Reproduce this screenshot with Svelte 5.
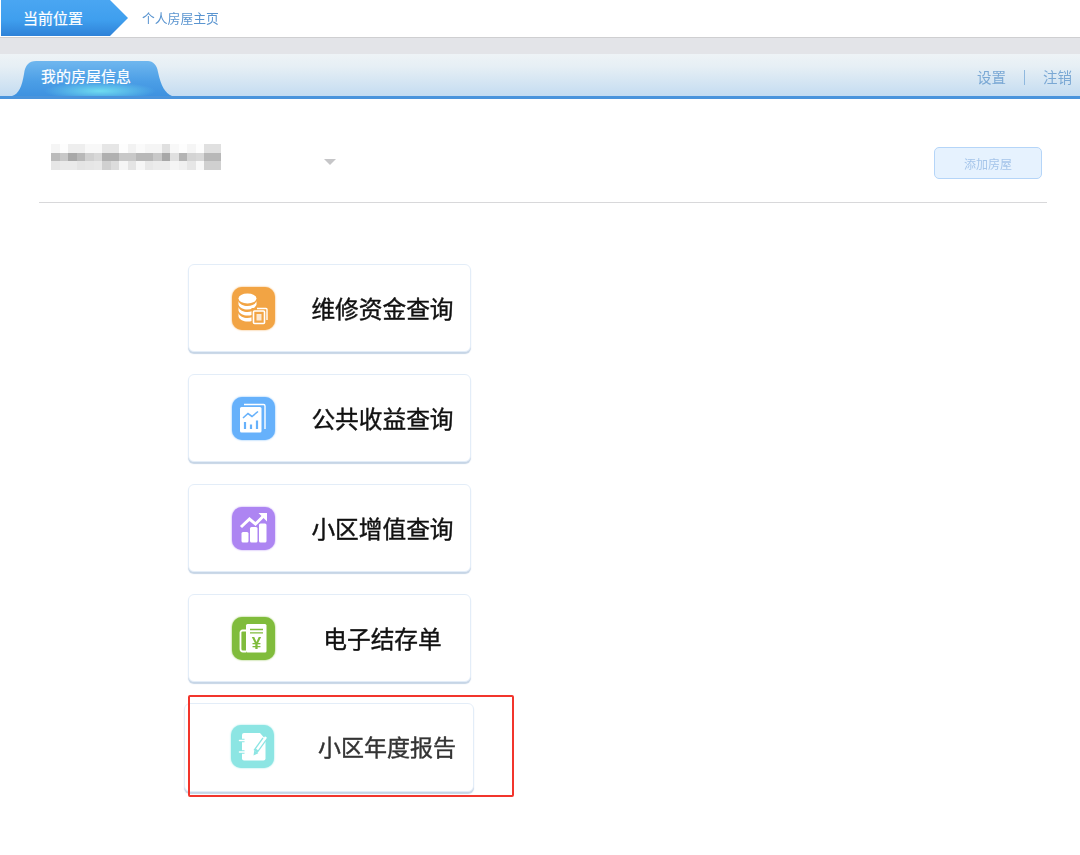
<script>
	// the house address is pixelated in the source, these are the grey levels of its cells
	const mosaic = [
		[245, 253, 238, 238, 248, 248, 230, 230, 253, 242, 250, 245, 245, 224, 248, 253, 245, 253, 224, 224],
		[187, 200, 168, 184, 208, 216, 176, 176, 200, 200, 184, 184, 200, 168, 224, 180, 212, 216, 184, 184],
		[230, 234, 234, 228, 230, 232, 208, 220, 245, 228, 246, 232, 236, 236, 245, 240, 230, 248, 208, 208]
	];

	const cards = [
		{ name: 'funds', label: '维修资金查询' },
		{ name: 'income', label: '公共收益查询' },
		{ name: 'value', label: '小区增值查询' },
		{ name: 'statement', label: '电子结存单' }
	];
</script>

{#snippet icon(name)}
	<svg class="icon {name}" viewBox="0 0 43 43" width="43" height="43">
		{#if name === 'funds'}
			<ellipse cx="15.500" cy="11.500" rx="9" ry="5" fill="#fff" />
			<path d="M6.500 14c1 3.200 4.800 5 9 5s8-1.800 9-5v3.600c-1 3.200-4.800 5-9 5s-8-1.800-9-5z" fill="#fff" />
			<path d="M6.500 20c1 3.200 4.800 5 9 5 1.600 0 3-.2 4.500-.7v3.700c-1.400.4-3 .6-4.500.6-4.200 0-8-1.800-9-5z" fill="#fff" />
			<path d="M6.500 26c1 3.200 4.800 5 9 5 1.600 0 3-.2 4.500-.7v3.700c-1.400.4-3 .6-4.500.6-4.200 0-8-1.800-9-5z" fill="#fff" />
			<rect x="19.500" y="21" width="15.500" height="16.500" fill="#f2a444" />
			<path d="M25 21.500h9a1 1 0 0 1 1 1V33" fill="none" stroke="#fff" stroke-width="1.400" />
			<rect x="21.500" y="24" width="11" height="12.500" rx="1" fill="none" stroke="#fff" stroke-width="1.600" />
			<rect x="24.500" y="27" width="5" height="6.500" fill="#fff" opacity="0.75" />
		{:else if name === 'income'}
			<path d="M12 7.500h19.500a1.500 1.500 0 0 1 1.500 1.500v23" fill="none" stroke="#fff" stroke-width="1.400" />
			<rect x="8" y="10" width="21.500" height="25.500" rx="1.500" fill="#fff" />
			<path d="M11 21l5-4.500 4 3 6-5" fill="none" stroke="#66b1fb" stroke-width="1.600" />
			<path d="M13 25v7M19 27.500V32M25 23.500V32" stroke="#66b1fb" stroke-width="2.200" />
		{:else if name === 'value'}
			<rect x="9.500" y="25" width="7" height="10.500" rx="1.500" fill="#fff" />
			<rect x="18" y="20" width="7.500" height="15.500" rx="1.500" fill="#fff" />
			<rect x="27" y="16.500" width="7.500" height="19" rx="1.500" fill="#fff" />
			<path d="M9 20l8.500-8 6 5L31 9.500" fill="none" stroke="#fff" stroke-width="3" />
			<path d="M26.500 6h8.500v8.500z" fill="#fff" />
		{:else if name === 'statement'}
			<path d="M14 13.500h-3.500A2 2 0 0 0 8.500 15.500v16.500a2.500 2.500 0 0 0 2.500 2.500h3" fill="none" stroke="#fff" stroke-width="1.800" />
			<rect x="14" y="7" width="20.500" height="28.500" rx="1.500" fill="#fff" />
			<path d="M18 12.500h13M18 15.800h13" stroke="#80bc3c" stroke-width="1.300" />
			<text x="24.500" y="32" text-anchor="middle" class="yen">¥</text>
		{:else}
			<rect x="11" y="8" width="23.500" height="27.500" rx="2" fill="#fff" />
			<path d="M8 15.500h5.500M8 27h5.500" stroke="#8ce5e3" stroke-width="3.400" />
			<path d="M8.500 15.500h5M8.500 27h5" stroke="#fff" stroke-width="1.500" stroke-linecap="round" />
			<path d="M29 8h7v8z" fill="#8ce5e3" />
			<path d="M24.500 26.500L33.500 14" stroke="#8ce5e3" stroke-width="5" />
			<path d="M26 24.500l9-12.500" stroke="#fff" stroke-width="2.400" />
			<path d="M22.500 30.500l.8-5 4 2.800z" fill="#8ce5e3" />
		{/if}
	</svg>
{/snippet}

<div class="page">
	<header class="crumbs">
		<div class="here">当前位置</div>
		<span class="path">个人房屋主页</span>
	</header>
	<div class="strip"></div>
	<nav class="tabs">
		<div class="tab">我的房屋信息</div>
		<div class="links">
			<span>设置</span>
			<i></i>
			<span>注销</span>
		</div>
	</nav>

	<section class="house">
		<div class="mosaic">
			{#each mosaic as row}
				{#each row as v}
					<span style="background:rgb({v},{v},{v})"></span>
				{/each}
			{/each}
		</div>
		<div class="caret"></div>
		<button class="add">添加房屋</button>
	</section>

	<main class="cards">
		{#each cards as c}
			<div class="card">
				{@render icon(c.name)}
				<span class="label">{c.label}</span>
			</div>
		{/each}
		<div class="card pasted">
			{@render icon('report')}
			<span class="label">小区年度报告</span>
			<div class="marker"></div>
		</div>
	</main>
</div>

<style>
	:global(body) {
		margin: 0;
		background: #fff;
	}

	.page {
		width: 1080px;
		height: 855px;
		overflow: hidden;
		font-family: 'Noto Sans CJK SC', 'Liberation Sans', sans-serif;
		filter: blur(0.5px);
	}

	.crumbs {
		display: flex;
		align-items: center;
		height: 37px;
		padding-left: 1px;
		border-bottom: 1px solid #cfcfd1;
	}

	.here {
		width: 127px;
		height: 36px;
		margin-bottom: 1px;
		padding-left: 22px;
		box-sizing: border-box;
		line-height: 36px;
		font-size: 15px;
		-webkit-text-stroke: 0.2px #fff;
		color: #fff;
		background: linear-gradient(#4aa6f2, #3f9fee 55%, #2f82d8);
		clip-path: polygon(0 0, 109px 0, 127px 18px, 109px 36px, 0 36px);
	}

	.path {
		margin: 0 0 2px 14px;
		font-size: 12.8px;
		color: #5b95d0;
	}

	.strip {
		height: 16px;
		background: #e3e4e8;
	}

	.tabs {
		display: flex;
		justify-content: space-between;
		align-items: flex-end;
		height: 42px;
		padding-left: 12px;
		background: linear-gradient(#eef3f6, #e6eff5 30%, #c4dcf1);
		border-bottom: 3px solid #4a94dc;
	}

	.tab {
		width: 160px;
		height: 36px;
		padding-left: 29px;
		box-sizing: border-box;
		font-size: 15px;
		-webkit-text-stroke: 0.2px #fff;
		line-height: 31px;
		color: #fff;
		background:
			radial-gradient(ellipse 56px 9px at 88px 31px, #6fdcf0, transparent),
			linear-gradient(#71b8ef, #4b9ee6 60%, #3e92e0);
		clip-path: path('M0 36C7 34 10 26 12 14 13 5 17 1 24 1H136C141 1 145 5 146 12 149 26 153 33 160 36Z');
	}

	.links {
		display: flex;
		align-items: center;
		height: 36px;
		margin: 0 8px 1px 0;
		font-size: 14.5px;
		color: #7aa8d4;
	}

	.links span {
		margin-top: -2px;
	}

	.links i {
		width: 1px;
		height: 15px;
		margin: 0 18px;
		background: #8fb8de;
	}

	.house {
		display: flex;
		align-items: flex-start;
		height: 104px;
		margin: 0 33px 0 39px;
		border-bottom: 1px solid #d8d8da;
		box-sizing: border-box;
	}

	.mosaic {
		display: grid;
		grid-template-columns: repeat(20, 8.5px);
		grid-template-rows: repeat(3, 8.5px);
		margin: 45px 0 0 12px;
		filter: blur(0.6px);
	}

	.caret {
		width: 0;
		height: 0;
		margin: 60px 0 0 103px;
		border-style: solid;
		border-width: 6px 6.500px 0;
		border-color: #c6c6c8 transparent transparent;
	}

	.add {
		width: 108px;
		height: 32px;
		margin: 48px 5px 0 auto;
		padding: 0;
		border: 1px solid #b5d5f8;
		border-radius: 5px;
		background: #e6f2fe;
		font: inherit;
		font-size: 12px;
		color: #a5c5ea;
	}

	.cards {
		display: flex;
		flex-direction: column;
		align-items: flex-start;
		gap: 22px;
		padding: 61px 0 0 188px;
	}

	.card {
		position: relative;
		display: flex;
		align-items: center;
		width: 283px;
		height: 88px;
		padding-left: 43px;
		box-sizing: border-box;
		border: 1px solid #e3edf8;
		border-radius: 6px;
		background: #fff;
		box-shadow: 0 2px 1px #c6d5e6;
	}

	.card .icon {
		flex: none;
		border-radius: 10px;
		box-shadow: 0 0 2px currentColor;
	}

	.label {
		flex: 1;
		margin-left: 20px;
		text-align: center;
		font-size: 23.7px;
		-webkit-text-stroke: 0.4px #111;
		color: #111;
		white-space: nowrap;
	}

	.funds {
		background: #f2a444;
		color: #f2a444;
	}

	.income {
		background: #66b1fb;
		color: #66b1fb;
	}

	.value {
		background: #ad85f2;
		color: #ad85f2;
	}

	.statement {
		background: #80bc3c;
		color: #80bc3c;
	}

	.report {
		background: #8ce5e3;
		color: #8ce5e3;
	}

	.yen {
		font-family: 'Liberation Sans', sans-serif;
		font-size: 17px;
		font-weight: 700;
		fill: #80bc3c;
	}

	.pasted {
		width: 290px;
		height: 89px;
		margin: -1px 0 0 -4px;
		padding: 0 0 2px 46px;
	}

	.pasted .label {
		margin: -2px 0 0 27px;
		font-size: 23px;
		-webkit-text-stroke: 0.4px #333;
		color: #333;
	}

	.marker {
		position: absolute;
		left: 3px;
		top: -9px;
		width: 326px;
		height: 102px;
		box-sizing: border-box;
		border: 2px solid #f2352c;
		border-radius: 2px;
	}
</style>
